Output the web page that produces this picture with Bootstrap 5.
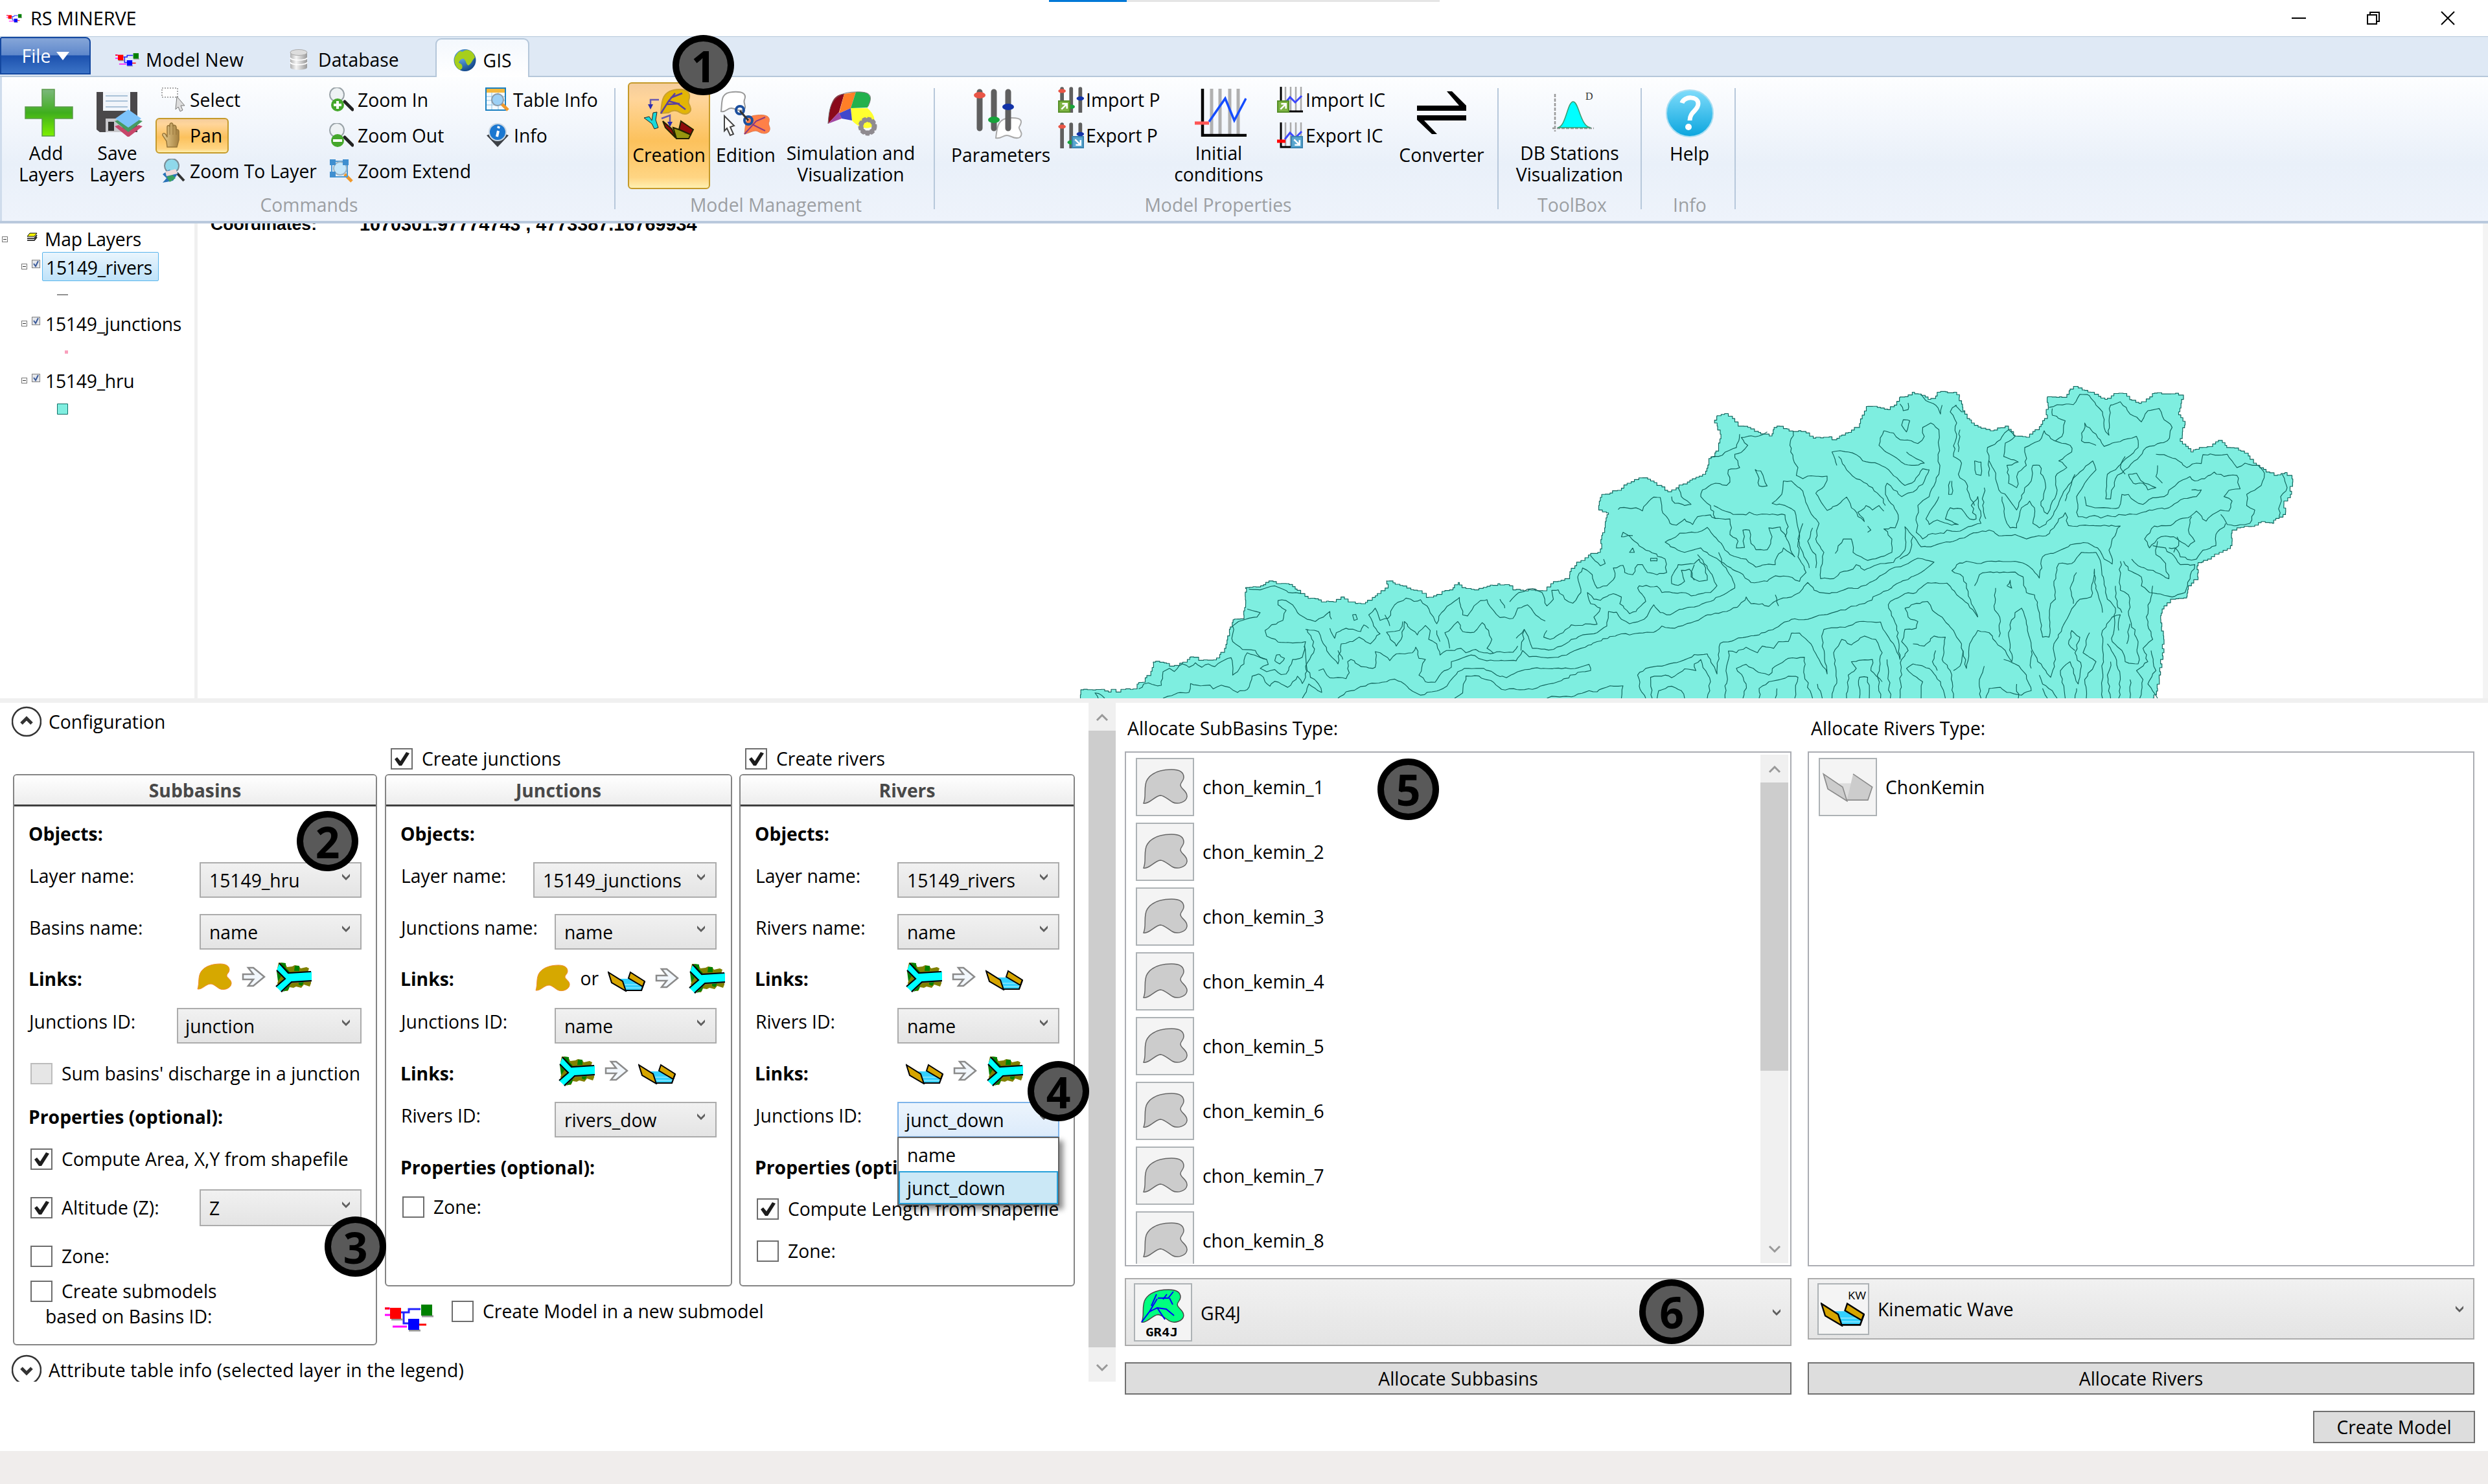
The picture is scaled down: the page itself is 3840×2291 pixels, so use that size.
<!DOCTYPE html>
<html lang="en">
<head>
<meta charset="utf-8">
<title>RS MINERVE</title>
<meta name="viewport" content="width=device-width, initial-scale=1">
<link href="https://cdn.jsdelivr.net/npm/bootstrap@5.3.0/dist/css/bootstrap.min.css" rel="stylesheet">
<script src="https://cdn.jsdelivr.net/npm/bootstrap@5.3.0/dist/js/bootstrap.bundle.min.js"></script>
<style>
  body{width:3840px;height:2291px;overflow:hidden;background:#fff;color:#000;font-family:"Open Sans","Noto Sans",sans-serif;font-size:28.3px;line-height:34px}
  svg{display:block;flex:none}
  .nw{white-space:nowrap}
  /* title bar */
  .titlebar{height:56px;padding-left:10px}
  .topstrip{left:1619px;top:0;width:603px;height:3px;background:linear-gradient(90deg,#0078d7 120px,#e5e5e5 120px)}
  /* ribbon */
  .tabbar{height:63px;background:#dfe9f5;border-top:1px solid #b5c7da;border-bottom:2px solid #b5c7da}
  .filebtn{width:140px;height:58px;color:#fff;border:2px solid #1448a0;border-radius:3px 8px 0 0;background:linear-gradient(#86a6d8 0,#5f88cb 48%,#1c51ae 50%,#3b73c6 100%);gap:9px;padding-left:1px}
  .gistab{width:145px;height:60px;margin-bottom:-2px;background:linear-gradient(#f4f8fd,#fff);border:2px solid #b5c7da;border-bottom:0;border-radius:9px 9px 0 0}
  .ribbon{height:226px;background:linear-gradient(#fdfeff 0,#f2f6fc 35%,#e9f0f9 60%,#eef3fb 100%);border-bottom:4px solid #b9c9dd;box-shadow:inset 3px 0 #cfdcec}
  .rib-sep{width:2px;height:187px;margin-top:17px;background:#b7c8db}
  .rib-group{padding-top:8px}
  .rib-main{height:165px}
  .rib-label{color:#9c9fa3;height:49px;padding-top:7px;text-align:center}
  .big{height:165px;padding-top:10px;text-align:center;line-height:33px;flex:none}
  .big svg{margin:0 auto 9px;position:relative}
  .big.one svg{margin-bottom:8px}
  .hot{background:linear-gradient(#f5cd9c 0,#ffd59a 15%,#fdc973 40%,#fcc15c 55%,#ffd583 90%,#fff0b0 100%);border:2px solid #c59a2a;border-radius:6px}
  .big.hot{padding-top:8px;width:127px}
  .sm{height:55px;padding-left:9px;padding-bottom:2px;gap:6px;white-space:nowrap}
  .sm.hot{width:113px;padding-left:7px}
  .sm svg{width:38px}
  /* map */
  .mapzone{height:733px}
  .tree{width:305px;border-right:5px solid #f0f0f0}
  .tree-row{height:44px}
  .exp{width:9px;height:9px;border:1px solid #777;background:linear-gradient(#333,#333) center/5px 1px no-repeat;flex:none}
  .tchk{width:13px;height:13px;border:1px solid #808080;background:#e4e6ea;flex:none;margin:-8px 0 0 7px}
  .sel-node{width:180px;height:45px;padding-left:5px;border:1px solid #59b5ec;border-radius:2px;background:linear-gradient(#eaf5fd,#bee2f9)}
  .tree span{letter-spacing:-.25px}
  .coords{font:bold 26.6px/30px "Liberation Sans",Arial,sans-serif;height:15px;overflow:hidden;padding-left:20px}
  .coords div{margin-top:-14px}
  .coords .cnum{font-size:28.8px;margin-left:66px}
  .hsplit{height:7px;background:#f0f0f0}
  /* configuration */
  .config{height:1155px}
  .left-pane{width:1680px;height:1048px;overflow:hidden;position:relative}
  .gbox{border:2px solid #848484;border-radius:6px;flex:none}
  .ghead{height:48px;border-bottom:3px solid #3f3f3f;background:linear-gradient(#fff,#ededed);color:#484848;font-weight:700;text-align:center;line-height:46px;border-radius:4px 4px 0 0}
  .gbody{padding:7px 22px 0 23px}
  .gr{display:flex;align-items:center;justify-content:space-between;white-space:nowrap;position:relative}
  .gr>.lab{padding-bottom:12px}
  .combo{height:55px;border:2px solid #acacac;background:linear-gradient(#f1f1f1,#e4e4e4);padding:2px 15px 0 13px;display:flex;align-items:center;justify-content:space-between}
  .combo svg{margin-top:-12px}
  .w250{width:250px}.w283{width:283px}.w285{width:285px}
  .combo.blue{border-color:#7eb4ea;background:linear-gradient(#ecf4fc,#dcebfb)}
  .cb{width:34px;height:33px;border:2px solid #6d6d6d;background:#fff;flex:none;margin-right:14px}
  .cb.off{border-color:#bcbcbc;background:#e6e6e6}
  .ck{display:flex;align-items:center;white-space:nowrap}
  .ck.in{padding-left:2px}
  .links{display:flex;align-items:center;gap:15px}
  .b{font-weight:700;text-indent:-1px}
  .dd{position:absolute;right:0;top:67px;width:250px;height:106px;background:#fff;border:2px solid #646464;box-shadow:6px 6px 8px rgba(0,0,0,.45);z-index:3}
  .dd div{height:51px;padding-left:13px;line-height:52px}
  .dd .on{background:#cbe8f6;border:2px solid #26a0da;padding-left:11px;line-height:49px}
  .sbar{background:#f0f0f0;display:flex;flex-direction:column;align-items:center;flex:none}
  .sbar .thumb{width:100%;background:#cdcdcd}
  .sbar .end{height:43px;display:flex;align-items:center}
  /* right lists */
  .lbox{height:795px;border:2px solid #abadb3;overflow:hidden;width:1029px}
  .li-row{height:90px;margin-bottom:10px;padding-left:15px}
  .tile{width:90px;height:90px;border:2px solid #adb2b5;background:#f4f4f4;display:flex;align-items:center;justify-content:center;flex:none}
  .wide{width:1029px;border:2px solid #acacac;background:linear-gradient(#f1f1f1,#e4e4e4);display:flex;align-items:center;padding:0 14px 0 12px}
  .pbtn{height:50px;border:2px solid #707070;border-radius:0;background:#ddd;font-size:28.3px;line-height:46px;text-align:center}
  .foot{height:51px;background:#f0edec}
  .pin{position:absolute;width:95px;height:93px;border:10px solid #000;border-radius:50%;background:#595959;z-index:9;font-size:66px;line-height:74px;font-weight:700;text-align:center}
</style>
</head>
<body class="d-flex flex-column position-relative">

<svg width="0" height="0" class="position-absolute">
  <defs>
    <linearGradient id="gGreen" x1="0" y1="0" x2="0" y2="1"><stop offset="0" stop-color="#7cb87c"/><stop offset=".5" stop-color="#3fae1d"/><stop offset="1" stop-color="#7df000"/></linearGradient>
    <linearGradient id="gHelp" x1="0" y1="0" x2="0" y2="1"><stop offset="0" stop-color="#7fdcfb"/><stop offset="1" stop-color="#0aa5de"/></linearGradient>
    <linearGradient id="gCyl" x1="0" x2="1"><stop offset="0" stop-color="#b0b0b0"/><stop offset=".35" stop-color="#f5f5f5"/><stop offset="1" stop-color="#999"/></linearGradient>
    <radialGradient id="gGlobe" cx=".35" cy=".3" r=".8"><stop offset="0" stop-color="#6fb6ee"/><stop offset="1" stop-color="#093c80"/></radialGradient>
    <linearGradient id="gHand" x1="0" x2="1"><stop offset="0" stop-color="#e9cf93"/><stop offset="1" stop-color="#a5803f"/></linearGradient>
  </defs>
  <symbol id="model" viewBox="0 0 75 42">
    <path d="M0 6h8M0 16h8" stroke="#f0f" stroke-width="3"/><path d="M0 6h7" stroke="red" stroke-width="3"/>
    <path d="M25 12h12V7h18M29 12v17h8" fill="none" stroke="#22f" stroke-width="3"/>
    <path d="M12 34h22" stroke="#f0f" stroke-width="3"/><path d="M52 31h12" stroke="red" stroke-width="3"/>
    <path d="M10 23h18M57 18h18M37 40h18" stroke="#999" stroke-width="3"/>
    <path d="M8 5h17v17H8z" fill="red"/><path d="M56 0h17v17H56z" fill="#008000"/><path d="M36 22h17v17H36z" fill="#00f"/>
  </symbol>
  <symbol id="basin" viewBox="0 0 54 42"><path d="M1 40C4 30 1 20 7 12 13 4 25 1 36 1c8 0 14 3 14 9 0 5-4 6-4 9 0 4 8 6 7 13-1 7-12 11-19 7-6-4-9-7-13-7-7 0-13 9-20 8z"/></symbol>
  <symbol id="arrow" viewBox="0 0 37 32"><path d="M2 12h16L10 2h8l17 14-17 14h-8l8-10H2z" fill="#f2f7fc" stroke="#8a8a8a" stroke-width="2.5"/></symbol>
  <symbol id="junc" viewBox="0 0 56 47">
    <path d="M5 1l10 1 3 6 8-1 4-2 6 1 3 4 9-2 4 2-2 6 5 3v14l-2 5-9-3-4 5-8-2-4 2-6-1-3 6-9-1L3 33l3-9-4-9z" fill="#808000"/>
    <path d="M8 1l8 1v7l6 6-5 3zM30 6h7v8h-8zM2 14l7 8-5 8zM24 31l-4 12-8 3zM36 31l8 0-3 6-5-2z" fill="#008000"/>
    <path d="M7 4l13 18h36M3 14l13 12M2 39l14-13M9 46l16-15 31-2" stroke="#777" stroke-width="3" fill="none"/>
    <path d="M6 3l14 14 36-2v14l-31 2L9 46 1 38l14-12L2 13z" fill="#0ff" /><path d="M6 2l14 15 35-2M2 13l13 13L1 38M9 46l16-15 31-2" stroke="#000" stroke-width="2.2" fill="none"/>
  </symbol>
  <symbol id="chan" viewBox="0 0 58 32">
    <path d="M19 12h15l20 12-2 6H28z" fill="#33d0ff"/><path d="M26 21h24M28 26h25" stroke="#8ae6ff" stroke-width="1.5"/>
    <path d="M1 2l22 14 5 15L6 18z" fill="#d6a500" stroke="#000" stroke-width="2"/>
    <path d="M35 2l22 14-3 8-22-13z" fill="#d6a500" stroke="#000" stroke-width="2"/><path d="M28 30h24l5-14" fill="none" stroke="#000" stroke-width="2.2"/>
  </symbol>
  <symbol id="tick" viewBox="0 0 30 29"><path d="M4 15l4-3 5 6L22 4l5 2L15 25h-4z" fill="#1c1c1c"/></symbol>
  <symbol id="chev" viewBox="0 0 14 11"><path d="M1 1l6 6 6-6v4l-6 6-6-6z" fill="#5e5e5e"/></symbol>
  <symbol id="mag" viewBox="0 0 38 38"><path d="M24 22l12 12" stroke="#222" stroke-width="5" stroke-linecap="round"/><ellipse cx="12" cy="11" rx="11" ry="11" fill="#eef2f4" stroke="#9aa3a8" stroke-width="2"/></symbol>
  <symbol id="sliders" viewBox="0 0 80 78"><g stroke="#5f5f5f" stroke-width="9" stroke-linecap="round"><path d="M9 5v56M31 5v56M53 5v56"/></g><ellipse cx="9" cy="10" rx="9" ry="5" fill="#e95546"/><ellipse cx="31" cy="48" rx="9" ry="5" fill="#16a33a"/><ellipse cx="53" cy="28" rx="9" ry="5" fill="#1232a8"/></symbol>
  <symbol id="impx" viewBox="0 0 18 18"><path d="M1 1h16v16H1z" fill="#7db343" stroke="#568f28" stroke-width="2"/><path d="M5 13l7-7M6 5h7v7" fill="none" stroke="#fff" stroke-width="2.4"/></symbol>
  <symbol id="expx" viewBox="0 0 18 18"><path d="M1 1h16v16H1z" fill="#5aa7d0" stroke="#3a83b0" stroke-width="2"/><path d="M5 5l7 7M6 13h7V6" fill="none" stroke="#fff" stroke-width="2.4"/></symbol>
  <symbol id="chart" viewBox="0 0 40 40"><path d="M13 0v38M21 0v38M29 0v38M37 0v38" stroke="#aaa" stroke-width="2.5"/><path d="M6 0v38h34" fill="none" stroke="#000" stroke-width="3"/><path d="M12 26l8-10 8 8 10-10" fill="none" stroke="#3c46ff" stroke-width="3"/></symbol>
  <symbol id="rtile" viewBox="0 0 72 56"><path d="M3 53C8 42 2 26 9 16 17 4 32 1 46 1c11 0 19 3 19 12 0 6-5 7-5 12 0 6 11 9 10 18-1 8-14 13-23 8-9-6-13-10-18-10-9 1-18 14-26 12z"/></symbol>
</svg>

<div class="topstrip position-absolute"></div>

<header class="titlebar d-flex align-items-center flex-shrink-0">
  <svg width="24" height="15"><use href="#model"/></svg>
  <span class="nw" style="margin-left:13px;font-size:28.8px">RS MINERVE</span>
  <div class="ms-auto d-flex align-items-center" style="gap:93px;padding-right:51px">
    <svg width="22" height="22"><path d="M0 11h22" stroke="#000" stroke-width="2"/></svg>
    <svg width="22" height="22"><path d="M2 6h14v14H2zM6 6V2h14v14h-4" fill="none" stroke="#000" stroke-width="2"/></svg>
    <svg width="22" height="22"><path d="M1 1l20 20M21 1L1 21" stroke="#000" stroke-width="2"/></svg>
  </div>
</header>

<nav class="tabbar d-flex align-items-end flex-shrink-0">
  <div class="filebtn d-flex align-items-center justify-content-center align-self-start">File <svg width="20" height="13"><path d="M0 0h20L10 13z" fill="#fff"/></svg></div>
  <div class="d-flex align-items-center nw" style="height:50px;margin-left:38px;gap:10px;letter-spacing:.2px"><svg width="37" height="21"><use href="#model"/></svg>Model New</div>
  <div class="d-flex align-items-center nw" style="height:50px;margin-left:71px;gap:16px">
    <svg width="28" height="33" viewBox="0 0 28 33"><path d="M1 5v23c0 5 26 5 26 0V5z" fill="url(#gCyl)"/><ellipse cx="14" cy="5" rx="13" ry="4.5" fill="#ddd" stroke="#aaa"/><path d="M1 13c0 5 26 5 26 0M1 20c0 5 26 5 26 0" fill="none" stroke="#fff" stroke-width="1.5"/></svg>Database</div>
  <div class="gistab d-flex align-items-center" style="margin-left:56px;padding-left:26px;gap:11px;padding-top:6px">
    <svg width="35" height="38" viewBox="0 0 35 38"><circle cx="17.500" cy="19" r="17" fill="url(#gGlobe)"/><path d="M17 4c7-3 15 3 16 11-4 3-5 9-10 12-4-2-3-6-6-9-3-4-8 1-9 5 4 1 7 4 5 9l-3 2C3 30 0 22 2 14c3-3 4-8 9-9 2 2 3 1 6-1z" fill="#a6cf1c"/></svg>GIS</div>
</nav>

<section class="ribbon d-flex flex-shrink-0">
  <div class="rib-group" style="width:948px">
    <div class="rib-main d-flex">
      <div class="big" style="width:84px;margin-left:29px"><svg width="75" height="74" viewBox="0 0 75 74" style="left:4px"><path d="M27 1h19v27h28v18H46v27H27V46H1V28h26z" fill="url(#gGreen)" stroke="#5a9a4a" stroke-width="1.5"/></svg>Add<br>Layers</div>
      <div class="big" style="width:90px;margin-left:23px"><svg width="75" height="74" viewBox="0 0 75 74" style="left:4px"><path d="M1 5h63v62H6l-5-4z" fill="#4a484a"/><path d="M11 5h42v29H11z" fill="#f1f5fa"/><path d="M15 11h34M15 19h34M15 28h34" stroke="#aac2d8" stroke-width="2"/><path d="M15 46h26v21H15z" fill="#c8c8cc"/><path d="M19 51h9v14h-9z" fill="#333"/><path d="M29 58l21 17 22-17-6-2-16 10-15-10z" fill="#c7476b"/><path d="M29 50l21 17 22-17-6-2-16 10-15-10z" fill="#479a63"/><path d="M30 46l20-14 20 14-20 14z" fill="#7cc3fb"/></svg>Save<br>Layers</div>
      <div style="width:259px;margin-left:14px">
        <div class="sm d-flex align-items-center"><svg height="38" viewBox="0 0 38 38"><path d="M1 1h24v14H1z" fill="#fff" stroke="#555" stroke-dasharray="2 2"/><path d="M24 14l12 14-6 0 3 7-4 2-3-7-4 4z" fill="#ddd" stroke="#777"/></svg>Select</div>
        <div class="sm hot d-flex align-items-center"><svg height="40" viewBox="0 0 38 40"><path d="M9 38l-1-9-6-9c-1-4 3-4 5-1l2 4V7c0-3 4-3 4 0V3c1-3 4-3 5 0v3c1-3 4-2 5 1v5c1-2 4-1 4 2v13l-3 11z" fill="url(#gHand)" stroke="#96753a" stroke-width="1.500"/><path d="M13 7v12M18 5v14M23 8v11" stroke="#96753a"/></svg>Pan</div>
        <div class="sm d-flex align-items-center"><svg height="38" viewBox="0 0 38 38"><path d="M24 22l11 12" stroke="#333" stroke-width="4"/><circle cx="16" cy="11" r="11" fill="#8fd8ea" stroke="#7a8c94" stroke-width="2"/><path d="M2 24l10-7 14 5-8 12-16 3 6-7z" fill="#2a73b8"/><path d="M8 28l9-3 5 5-9 6z" fill="#39a060"/><path d="M6 20l16-4 3 7-17 4z" fill="#f0dada"/></svg>Zoom To Layer</div>
      </div>
      <div style="width:241px">
        <div class="sm d-flex align-items-center"><svg height="38" viewBox="0 0 38 38"><use href="#mag"/><circle cx="13" cy="27" r="10" fill="#45a72b"/><path d="M7 27h12M13 21v12" stroke="#fff" stroke-width="4"/></svg>Zoom In</div>
        <div class="sm d-flex align-items-center"><svg height="38" viewBox="0 0 38 38"><use href="#mag"/><circle cx="13" cy="27" r="10" fill="#45a72b"/><path d="M6 27h14" stroke="#fff" stroke-width="4"/></svg>Zoom Out</div>
        <div class="sm d-flex align-items-center"><svg height="38" viewBox="0 0 38 38"><path d="M24 24l11 11" stroke="#f0982a" stroke-width="5"/><path d="M4 4h24v24H4z" fill="none" stroke="#4d9bd6" stroke-width="2"/><circle cx="17" cy="15" r="10" fill="#c5e7fb" stroke="#9bb4c4" stroke-width="2"/><path d="M1 1h9v9H1zM21 1h9v9h-9zM1 20h9v9H1z" fill="#3f8fd0"/></svg>Zoom Extend</div>
      </div>
      <div>
        <div class="sm d-flex align-items-center" style="gap:5px"><svg height="38" viewBox="0 0 38 38"><path d="M1 1h30v34H1z" fill="#f4fafe" stroke="#1a7fc0" stroke-width="2"/><path d="M2 2h28v6H2z" fill="#f5b83d"/><path d="M2 14h28M2 20h28M2 27h28M10 8v26M20 8v26" stroke="#8fc3e4"/><path d="M25 25l10 10" stroke="#f0982a" stroke-width="5"/><circle cx="19" cy="19" r="9" fill="#9cd0f5" stroke="#8a9aa8" stroke-width="2"/></svg>Table Info</div>
        <div class="sm d-flex align-items-center"><svg height="38" viewBox="0 0 38 38"><path d="M2 19l17-7 17 7-17 18z" fill="#3d4147"/><circle cx="19" cy="14" r="13" fill="#1b77d0" stroke="#c9d6e2" stroke-width="2"/><path d="M20 12l-2 9M21 5l-1 3" stroke="#fff" stroke-width="4"/></svg>Info</div>
      </div>
    </div>
    <div class="rib-label" style="padding-left:6px">Commands</div>
  </div>
  <div class="rib-sep"></div>
  <div class="rib-group" style="width:491px">
    <div class="rib-main d-flex">
      <div class="big one hot" style="margin-left:19px"><svg width="80" height="78" viewBox="0 0 80 78"><path d="M27 38C28 20 28 2 55 1c14 0 17 6 16 13-2 6-2 8 1 13 4 10-6 15-15 10-8-6-14-3-18 0z" fill="#e3b505" stroke="#caa030" stroke-width="2"/><path d="M27 38l12-19 10-12M39 19l14 4 12 9M36 24l20-1M42 14l18-7" stroke="#5a3fa0" stroke-width="2.500" fill="none"/><path d="M24 17H11v8M28 46l13-5v12" fill="none" stroke="#6a5ab0" stroke-width="2.500"/><path d="M7 24h8l-4 8zM37 51h8l-4 8z" fill="#2a2ab0"/><path d="M1 45l8-2 4 6 2-12 6-1-2 12 4 12-6 2-4-8z" fill="#18d8d8" stroke="#222"/><path d="M30 50l14 12 6 14-16-16zM58 50l19 13-4 8-18-8z" fill="#8d0a0a" stroke="#220" stroke-width="2"/><path d="M46 60l9 3 18 8-3 6H51z" fill="#97960e" stroke="#220" stroke-width="2"/></svg>Creation</div>
      <div class="big one" style="width:94px;margin-left:8px"><svg width="80" height="78" viewBox="0 0 80 78"><path d="M2 35C4 20 0 6 20 5c14-1 22 2 18 12-3 6 6 12-3 16-8 3-12-4-18-3-6 0-8 7-15 5z" fill="#fff" stroke="#999" stroke-width="2"/><path d="M38 70C40 56 38 42 56 41c16-2 22 2 20 10-3 5 4 8 0 15-5 5-12 3-17 0-6-3-12 2-21 4z" fill="#ff8048" stroke="#e07a4c"/><path d="M38 70l18-20 14-6M50 55l20 10" stroke="#8c3a80" stroke-width="2" fill="none"/><circle cx="31" cy="33" r="6" fill="none" stroke="#1c4f9e" stroke-width="4"/><circle cx="44" cy="49" r="6" fill="none" stroke="#1c4f9e" stroke-width="4"/><path d="M31 34l13 15" stroke="#333" stroke-width="3"/><path d="M7 42l15 15-6 2 5 11-5 2-5-11-4 4z" fill="#fff" stroke="#444" stroke-width="2"/></svg>Edition</div>
      <div class="big nw" style="width:210px;margin-left:10px"><svg width="78" height="74" viewBox="0 0 78 74" style="left:3px"><path d="M1 54C3 36 4 8 26 8l-8 28z" fill="#8a0a1a"/><path d="M26 8l18-3-8 25-18 8z" fill="#ff7f27"/><path d="M44 5c16-1 24 3 22 14l-4 10-26 1z" fill="#22b14c"/><path d="M36 30h26c6 6 14 14 9 27-9 8-24 2-33-8z" fill="#ffff30"/><path d="M18 38l18-8 2 19-16-3z" fill="#3f48cc"/><path d="M1 54l17-18 4 10z" fill="#a349a4"/><path d="M1 54C3 30 4 5 44 5c26-1 25 8 19 22" fill="none" stroke="#777"/><circle cx="62" cy="58" r="10.500" fill="none" stroke="#8f8b90" stroke-width="8" stroke-dasharray="5 2"/><circle cx="62" cy="58" r="10" fill="none" stroke="#8f8b90" stroke-width="6"/></svg>Simulation and<br>Visualization</div>
    </div>
    <div class="rib-label" style="padding-left:4px">Model Management</div>
  </div>
  <div class="rib-sep"></div>
  <div class="rib-group" style="width:868px">
    <div class="rib-main d-flex">
      <div class="big one" style="width:150px;margin-left:25px"><svg width="80" height="78"><path d="M34 76C36 60 36 46 56 45c20-1 19 6 14 14-2 3 8 10 1 16-7 4-14-3-20-3-6 0-10 6-17 4z" fill="#fff" stroke="#aaa" stroke-width="2"/><use href="#sliders"/></svg>Parameters</div>
      <div style="width:176px;margin-left:6px">
        <div class="sm d-flex align-items-center" style="gap:3px"><svg height="40" viewBox="0 0 40 40" style="width:40px"><use href="#sliders" x="-1" y="0" width="54" height="50"/><use href="#impx" x="0" y="21" width="19" height="19"/></svg>Import P</div>
        <div class="sm d-flex align-items-center" style="gap:3px"><svg height="40" viewBox="0 0 40 40" style="width:40px"><use href="#sliders" x="-1" y="0" width="54" height="50"/><use href="#expx" x="21" y="21" width="19" height="19"/></svg>Export P</div>
      </div>
      <div class="big" style="width:140px;margin-left:11px"><svg width="80" height="74" viewBox="0 0 80 74" style="left:3px"><path d="M26 0v70M39 0v70M54 0v70M67 0v70" stroke="#b0b0b0" stroke-width="5"/><path d="M12 0v72h68" fill="none" stroke="#000" stroke-width="4.500"/><path d="M22 51l25-36 14 34 18-34" fill="none" stroke="#144cff" stroke-width="3.500"/><path d="M0 53h22" stroke="#f55" stroke-width="5"/></svg>Initial<br>conditions</div>
      <div style="width:187px;margin-left:11px">
        <div class="sm d-flex align-items-center" style="gap:4px"><svg height="40" viewBox="0 0 40 40" style="width:40px"><use href="#chart"/><use href="#impx" x="0" y="21" width="19" height="19"/></svg>Import IC</div>
        <div class="sm d-flex align-items-center" style="gap:4px"><svg height="40" viewBox="0 0 40 40" style="width:40px"><use href="#chart"/><path d="M0 29h13" stroke="red" stroke-width="5"/><use href="#expx" x="21" y="21" width="19" height="19"/></svg>Export IC</div>
      </div>
      <div class="big one" style="width:136px;margin-left:8px"><svg width="76" height="78" viewBox="0 0 76 78"><path d="M46 4h8l22 22v8H0v-8h65zM0 41h76v8H11l20 21h-8L0 48z" fill="#000"/></svg>Converter</div>
    </div>
    <div class="rib-label" style="padding-left:6px">Model Properties</div>
  </div>
  <div class="rib-sep"></div>
  <div class="rib-group" style="width:219px">
    <div class="rib-main d-flex justify-content-center">
      <div class="big nw" style="width:190px"><svg width="66" height="74" viewBox="0 0 66 74" style="left:4px"><path d="M6 8v58M2 61h64" stroke="#999" stroke-width="2.500" stroke-dasharray="5 2"/><path d="M10 60c13-1 15-40 24-40s11 39 27 40z" fill="#0ff" stroke="#3a9a70" stroke-width="1.500"/><text x="53" y="17" font-size="16" font-family="Liberation Serif" fill="#333">D</text></svg>DB Stations<br>Visualization</div>
    </div>
    <div class="rib-label" style="padding-left:8px">ToolBox</div>
  </div>
  <div class="rib-sep"></div>
  <div class="rib-group" style="width:143px">
    <div class="rib-main d-flex justify-content-center" style="padding-left:4px">
      <div class="big" style="width:90px"><svg width="76" height="76" viewBox="0 0 76 76" style="margin-bottom:8px"><circle cx="38" cy="38" r="36" fill="url(#gHelp)" stroke="#a8def2" stroke-width="2"/><path d="M26 22c3-11 25-11 25 1 0 11-13 12-13 26" fill="none" stroke="#fff" stroke-width="7"/><circle cx="36" cy="59" r="5" fill="#fff"/></svg>Help</div>
    </div>
    <div class="rib-label" style="padding-left:5px">Info</div>
  </div>
  <div class="rib-sep"></div>
</section>

<section class="mapzone d-flex flex-shrink-0">
  <aside class="tree flex-shrink-0">
    <div class="tree-row d-flex align-items-center" style="padding:4px 0 0 3px"><i class="exp"></i><svg width="16" height="13" viewBox="0 0 16 13" style="margin:-8px 11px 0 30px"><path d="M4 1h11l-4 5H0z" fill="#ff0" stroke="#000"/><path d="M0 9h11l4-5M0 12h11l4-5" fill="none" stroke="#000" stroke-width="1.500"/></svg><span>Map Layers</span></div>
    <div class="tree-row d-flex align-items-center" style="padding-left:33px"><i class="exp"></i><i class="tchk"><svg width="11" height="11"><path d="M2 5l3 4 4-8" fill="none" stroke="#3a5a9a" stroke-width="2"/></svg></i><span class="sel-node" style="margin-left:3px;line-height:46px">15149_rivers</span></div>
    <div class="tree-row" style="padding:21px 0 0 88px"><svg width="17" height="2"><path d="M0 1h17" stroke="#222"/></svg></div>
    <div class="tree-row d-flex align-items-center" style="padding-left:33px"><i class="exp"></i><i class="tchk"><svg width="11" height="11"><path d="M2 5l3 4 4-8" fill="none" stroke="#3a5a9a" stroke-width="2"/></svg></i><span style="margin:2px 0 0 8px">15149_junctions</span></div>
    <div class="tree-row" style="padding:20px 0 0 100px"><svg width="5" height="5"><path d="M0 0h5v5H0z" fill="#f9a0bd"/></svg></div>
    <div class="tree-row d-flex align-items-center" style="padding-left:33px"><i class="exp"></i><i class="tchk"><svg width="11" height="11"><path d="M2 5l3 4 4-8" fill="none" stroke="#3a5a9a" stroke-width="2"/></svg></i><span style="margin:2px 0 0 8px">15149_hru</span></div>
    <div class="tree-row" style="padding:14px 0 0 88px"><svg width="17" height="17"><path d="M.5.5h16v16H.5z" fill="#80eee0" stroke="#0d6f66"/></svg></div>
  </aside>
  <div class="flex-grow-1">
    <div class="coords"><div class="d-flex nw align-items-center"><span>Coordinates:</span><span class="cnum">1070301.97774743 , 4773387.16769934</span></div></div>
    <svg id="map" width="1960" height="518" viewBox="0 0 1568 1504" preserveAspectRatio="none" style="margin:200px 0 0 1335px" fill="none" stroke="#0f625a" stroke-width="1.150" stroke-linejoin="round"></svg>
  </div>
  <div style="width:8px;background:#f4f4f4"></div>
</section>
<div class="hsplit flex-shrink-0"></div>

<main class="config d-flex flex-shrink-0">
  <div class="left-pane flex-shrink-0">
    <div class="d-flex align-items-center" style="height:60px;padding:0 0 4px 18px;gap:11px"><svg width="46" height="48" viewBox="0 0 46 48" style="margin-top:2px"><circle cx="23" cy="24" r="22" fill="#fff" stroke="#333" stroke-width="2.500"/><path d="M15 27l8-8 8 8" fill="none" stroke="#333" stroke-width="5"/></svg><span style="padding-top:2px">Configuration</span></div>
    <div class="d-flex align-items-start">
      <div class="gbox" style="margin:50px 0 0 20px;width:562px;height:882px">
        <div class="ghead">Subbasins</div>
        <div class="gbody">
          <div class="gr b" style="height:70px">Objects:</div>
          <div class="gr" style="height:72px"><span class="lab">Layer name:</span><div class="combo w250">15149_hru<svg width="14" height="11"><use href="#chev"/></svg></div></div>
          <div class="gr" style="height:88px"><span class="lab">Basins name:</span><div class="combo w250">name<svg width="14" height="11"><use href="#chev"/></svg></div></div>
          <div class="gr" style="height:58px"><span class="b">Links:</span><div class="links" style="margin:-6px 77px 0 0"><svg width="54" height="42" fill="#d6a800" stroke="#f08c30"><use href="#basin"/></svg><svg width="37" height="32"><use href="#arrow"/></svg><svg width="56" height="47"><use href="#junc"/></svg></div></div>
          <div class="gr" style="height:86px"><span class="lab">Junctions ID:</span><div class="combo w285" style="padding-left:11px">junction<svg width="14" height="11"><use href="#chev"/></svg></div></div>
          <div class="ck in" style="height:62px"><i class="cb off"></i>Sum basins' discharge in a junction</div>
          <div class="gr b" style="height:72px">Properties (optional):</div>
          <div class="ck in" style="height:58px"><i class="cb"><svg width="30" height="29"><use href="#tick"/></svg></i>Compute Area, X,Y from shapefile</div>
          <div class="gr" style="height:92px"><div class="ck in"><i class="cb"><svg width="30" height="29"><use href="#tick"/></svg></i>Altitude (Z):</div><div class="combo w250" style="height:57px">Z<svg width="14" height="11"><use href="#chev"/></svg></div></div>
          <div class="ck in" style="height:58px"><i class="cb"></i>Zone:</div>
          <div class="ck in" style="height:50px"><i class="cb"></i>Create submodels</div>
          <div style="height:28px;line-height:28px;padding-left:25px">based on Basins ID:</div>
        </div>
      </div>
      <div style="margin-left:12px">
        <div class="d-flex">
          <div>
            <div class="ck" style="height:50px;padding:2px 0 0 9px"><i class="cb"><svg width="30" height="29"><use href="#tick"/></svg></i>Create junctions</div>
            <div class="gbox" style="width:536px;height:791px">
              <div class="ghead">Junctions</div>
              <div class="gbody">
                <div class="gr b" style="height:70px">Objects:</div>
                <div class="gr" style="height:72px"><span class="lab">Layer name:</span><div class="combo w283">15149_junctions<svg width="14" height="11"><use href="#chev"/></svg></div></div>
                <div class="gr" style="height:88px"><span class="lab">Junctions name:</span><div class="combo w250">name<svg width="14" height="11"><use href="#chev"/></svg></div></div>
                <div class="gr" style="height:58px"><span class="b">Links:</span><div class="links" style="margin:-2px -13px 0 0"><svg width="54" height="42" fill="#d6a800" stroke="#f08c30"><use href="#basin"/></svg>or<svg width="58" height="32" style="margin-top:10px;margin-left:-1px"><use href="#chan"/></svg><svg width="37" height="32"><use href="#arrow"/></svg><svg width="56" height="47"><use href="#junc"/></svg></div></div>
                <div class="gr" style="height:86px"><span class="lab">Junctions ID:</span><div class="combo w250">name<svg width="14" height="11"><use href="#chev"/></svg></div></div>
                <div class="gr" style="height:62px"><span class="b">Links:</span><div class="links" style="margin:-8px 63px 0 0"><svg width="56" height="47"><use href="#junc"/></svg><svg width="37" height="32"><use href="#arrow"/></svg><svg width="58" height="32" style="margin-top:10px"><use href="#chan"/></svg></div></div>
                <div class="gr" style="height:80px"><span class="lab">Rivers ID:</span><div class="combo w250">rivers_dow<svg width="14" height="11"><use href="#chev"/></svg></div></div>
                <div class="gr b" style="height:68px">Properties (optional):</div>
                <div class="ck in" style="height:54px"><i class="cb"></i>Zone:</div>
              </div>
            </div>
          </div>
          <div style="margin-left:11px">
            <div class="ck" style="height:50px;padding:2px 0 0 9px"><i class="cb"><svg width="30" height="29"><use href="#tick"/></svg></i>Create rivers</div>
            <div class="gbox" style="width:518px;height:791px">
              <div class="ghead">Rivers</div>
              <div class="gbody">
                <div class="gr b" style="height:70px">Objects:</div>
                <div class="gr" style="height:72px"><span class="lab">Layer name:</span><div class="combo w250">15149_rivers<svg width="14" height="11"><use href="#chev"/></svg></div></div>
                <div class="gr" style="height:88px"><span class="lab">Rivers name:</span><div class="combo w250">name<svg width="14" height="11"><use href="#chev"/></svg></div></div>
                <div class="gr" style="height:58px"><span class="b">Links:</span><div class="links" style="margin:-6px 56px 0 0"><svg width="56" height="47"><use href="#junc"/></svg><svg width="37" height="32"><use href="#arrow"/></svg><svg width="58" height="32" style="margin-top:10px"><use href="#chan"/></svg></div></div>
                <div class="gr" style="height:86px"><span class="lab">Rivers ID:</span><div class="combo w250">name<svg width="14" height="11"><use href="#chev"/></svg></div></div>
                <div class="gr" style="height:62px"><span class="b">Links:</span><div class="links" style="margin:-8px 56px 0 0"><svg width="58" height="32" style="margin-top:10px"><use href="#chan"/></svg><svg width="37" height="32"><use href="#arrow"/></svg><svg width="56" height="47"><use href="#junc"/></svg></div></div>
                <div class="gr" style="height:80px"><span class="lab">Junctions ID:</span><div class="combo w250 blue" style="padding-left:11px">junct_down<svg width="14" height="11"><use href="#chev"/></svg></div>
                  <div class="dd"><div>name</div><div class="on">junct_down</div></div></div>
                <div class="gr b" style="height:68px">Properties (optional):</div>
                <div class="ck in" style="height:60px"><i class="cb"><svg width="30" height="29"><use href="#tick"/></svg></i>Compute Length from shapefile</div>
                <div class="ck in" style="height:70px"><i class="cb"></i>Zone:</div>
              </div>
            </div>
          </div>
        </div>
        <div class="ck" style="height:76px"><svg width="75" height="42" style="margin:21px 28px 0 0"><use href="#model"/></svg><i class="cb"></i>Create Model in a new submodel</div>
      </div>
    </div>
    <div class="d-flex align-items-center" style="height:60px;margin-top:8px;padding-left:18px;gap:11px"><svg width="46" height="48" viewBox="0 0 46 48"><circle cx="23" cy="24" r="22" fill="#fff" stroke="#333" stroke-width="2.500"/><path d="M15 21l8 8 8-8" fill="none" stroke="#333" stroke-width="5"/></svg><span style="letter-spacing:.15px">Attribute table info (selected layer in the legend)</span></div>
  </div>

  <div class="sbar" style="width:42px;height:1048px">
    <div class="end"><svg width="20" height="14"><path d="M2 12l8-8 8 8" fill="none" stroke="#999" stroke-width="3"/></svg></div>
    <div class="thumb" style="height:952px"></div>
    <div class="end mt-auto"><svg width="20" height="14"><path d="M2 2l8 8 8-8" fill="none" stroke="#999" stroke-width="3"/></svg></div>
  </div>

  <div style="margin-left:14px;width:2084px" class="flex-shrink-0">
    <div class="d-flex" style="gap:25px">
      <div>
        <div style="height:75px;padding:22px 0 0 4px">Allocate SubBasins Type:</div>
        <div class="lbox d-flex">
          <div class="flex-grow-1" style="padding-top:8px;height:789px;overflow:hidden" id="basins"></div>
          <div class="sbar" style="width:43px;height:785px;margin:3px 3px 0 0">
            <div class="end"><svg width="20" height="14"><path d="M2 12l8-8 8 8" fill="none" stroke="#999" stroke-width="3"/></svg></div>
            <div class="thumb" style="height:445px"></div>
            <div class="end mt-auto"><svg width="20" height="14"><path d="M2 2l8 8 8-8" fill="none" stroke="#999" stroke-width="3"/></svg></div>
          </div>
        </div>
        <div class="wide" style="height:105px;margin-top:18px"><div class="tile"><svg width="76" height="80" viewBox="0 0 76 80"><g transform="translate(2 4)" fill="#00ff80" stroke="#444" stroke-width="1.500"><use href="#rtile" width="70" height="54"/></g><path d="M5 55l12-16 12-20M17 39l12-6 14 2 12 10M29 33l12 18M20 30l8-18M30 18h16l8-10M48 18l5 10M44 12l-6 8" stroke="#00f" stroke-width="2" fill="none"/><text x="11" y="77" font-family="DejaVu Sans Mono" font-weight="bold" font-size="17" textLength="50" lengthAdjust="spacingAndGlyphs">GR4J</text></svg></div><span style="margin:3px 0 0 13px">GR4J</span><svg class="ms-auto" width="14" height="11"><use href="#chev"/></svg></div>
        <div class="pbtn" style="margin-top:25px">Allocate Subbasins</div>
      </div>
      <div>
        <div style="height:75px;padding:22px 0 0 5px">Allocate Rivers Type:</div>
        <div class="lbox"><div class="li-row d-flex align-items-center" style="margin-top:8px"><div class="tile"><svg width="78" height="46" viewBox="0 0 58 32" preserveAspectRatio="none"><path d="M19 12h15l20 12-2 6H28z" fill="#ddd"/><path d="M1 2l22 14 5 15L6 18zM35 2l22 14-5 14H28" fill="#ccc" stroke="#8a8a8a" stroke-width="1.200"/></svg></div><span style="margin-left:13px">ChonKemin</span></div></div>
        <div class="wide" style="height:95px;margin-top:18px"><div class="tile" style="width:80px;height:80px;margin-left:1px"><svg width="74" height="72" viewBox="0 0 74 72"><text x="44" y="21" font-size="17" textLength="28" lengthAdjust="spacingAndGlyphs">KW</text><use href="#chan" x="2" y="25" width="68" height="38"/></svg></div><span style="margin:1px 0 0 13px">Kinematic Wave</span><svg class="ms-auto" width="14" height="11"><use href="#chev"/></svg></div>
        <div class="pbtn" style="margin-top:35px">Allocate Rivers</div>
      </div>
    </div>
    <div class="d-flex justify-content-end"><div class="pbtn" style="width:250px;margin-top:25px">Create Model</div></div>
  </div>
</main>
<footer class="foot flex-shrink-0"></footer>

<div class="pin" style="left:1038px;top:54px">1</div>
<div class="pin" style="left:458px;top:1252px">2</div>
<div class="pin" style="left:501px;top:1878px">3</div>
<div class="pin" style="left:1586px;top:1638px">4</div>
<div class="pin" style="left:2126px;top:1171px;height:95px">5</div>
<div class="pin" style="left:2530px;top:1975px;width:100px;height:100px;line-height:80px">6</div>

<script>
  // catchment boundary and elevation band boundaries, in the map's own units
  const outline = "22 1504 26 1466 52 1464 60 1476 66 1464 72 1476 78 1464 92 1462 94 1440 102 1432 104 1412 109 1402 112 1345 120 1338 132 1348 138 1360 154 1342 158 1320 168 1320 174 1334 190 1332 200 1298 203 1262 206 1210 212 1152 224 1148 226 1012 248 1000 260 978 270 990 284 994 294 1020 306 1056 316 1058 326 1072 338 1072 348 1050 356 1072 374 1080 386 1052 402 1010 400 978 408 978 420 998 430 1010 444 1022 452 1052 462 1045 472 1025 482 1018 490 985 498 1008 514 1018 528 1002 540 990 556 1000 560 1018 598 1022 606 990 626 968 628 936 640 894 652 862 664 850 670 740 674 680 662 660 664 620 670 590 690 572 702 540 716 516 726 522 740 550 752 578 766 548 782 520 794 500 798 440 810 396 812 320 805 270 808 240 822 228 830 250 836 284 846 285 862 312 876 328 882 290 890 285 902 306 918 308 930 338 950 332 956 345 962 328 974 312 984 290 990 235 994 196 1010 200 1022 210 1030 190 1034 156 1044 152 1052 132 1060 140 1072 164 1078 160 1084 132 1104 132 1110 170 1114 215 1120 250 1134 288 1150 305 1158 292 1168 284 1176 325 1194 334 1206 300 1216 250 1216 156 1240 155 1244 125 1254 106 1262 122 1274 132 1290 164 1298 148 1304 138 1314 138 1320 165 1332 182 1338 175 1348 138 1378 137 1384 145 1378 220 1386 262 1380 340 1390 375 1396 400 1408 380 1420 376 1432 348 1442 380 1452 382 1464 405 1474 450 1486 478 1500 505 1512 492 1518 505 1516 590 1508 620 1510 670 1498 698 1494 720 1480 712 1472 728 1450 740 1444 750 1442 820 1428 850 1414 880 1402 896 1402 960 1390 1000 1388 1048 1368 1060 1360 1090 1356 1150 1360 1240 1358 1300 1354 1400 1352 1460 1346 1504";
  const bands = [
    "44 1504 40 1480 48 1490 52 1504","94 1462 100 1440 106 1435 114 1445 122 1446 124 1385 132 1370 138 1384 148 1350 156 1365 164 1345 172 1365 180 1350 188 1362 196 1340 208 1322 210 1400 216 1385 224 1350 228 1300 252 1330 254 1352 244 1370 252 1385 262 1375 270 1398 276 1395 284 1330 296 1320 300 1250 284 1256 266 1252 252 1225 250 1200 258 1175 272 1155 276 1110 266 1085 266 1066 276 1066 284 1085 290 1120 302 1150 312 1160 322 1140 330 1115 332 1150",
    "230 1015 244 1018 262 1000 272 1015 284 1032 294 1034","228 1104 244 1120 240 1140 222 1155 210 1180 210 1250 222 1285 238 1290 244 1320 252 1330","124 1504 130 1495 142 1480 156 1478 158 1438 170 1448 182 1445 186 1462 196 1445 206 1455 216 1478 228 1465 234 1405 242 1395 248 1410 250 1430 256 1450 262 1428 270 1440 278 1455 284 1430 290 1405 296 1438 300 1410 302 1380 298 1270",
    "264 1310 268 1308 274 1325 268 1350 262 1335 264 1310","302 1195 310 1250 310 1300 300 1360 306 1410 316 1440 320 1478 312 1460 304 1440 296 1504","300 1195 316 1205 322 1260 330 1310 340 1350 344 1260 358 1250 366 1230 380 1260 392 1215 384 1180 378 1130 386 1100 392 1155 402 1145 410 1085 424 1055 434 1070 442 1062 450 1090 458 1140 462 1170 468 1120 480 1080 490 1052 494 1130 500 1135 508 1090 516 1066 524 1062 532 1110 540 1142 556 1146 562 1100 574 1085 584 1130 596 1158",
    "316 1380 322 1372 330 1412 350 1416 354 1390 352 1340 356 1330 366 1355 378 1368 386 1365 386 1295 396 1310 404 1335 412 1305 432 1300 436 1275 440 1325 448 1330 440 1400 448 1430 460 1432 468 1390 480 1365 480 1340 504 1310 524 1336 560 1336 568 1290 576 1318 612 1320 640 1280 660 1250 690 1215 700 1220 712 1212 730 1208 740 1180 756 1190 780 1160 796 1130 820 1115 836 1085 844 1050 850 1080 864 1080 872 1092 884 1062 900 1050 910 1030 920 985 928 1020 940 1032 956 1030 970 1010 982 1012 1000 980 1020 930 1044 900 1056 876 1076 894 1060 940 1030 990 1010 1035 994 1070 970 1100 940 1130 920 1150 900 1150 880 1190 860 1220 840 1232 812 1258 808 1395 800 1330 796 1305 780 1308 762 1340 740 1360 720 1370 710 1400 712 1450 720 1504",
    "330 1190 336 1235 338 1210 350 1190 368 1205 372 1175 378 1190","358 1130 362 1128 364 1150 360 1155 358 1130","420 1160 416 1200 400 1208 412 1270 418 1240 422 1160 430 1195 438 1220 448 1178 454 1200 452 1240 462 1260 466 1310 474 1290 484 1290 492 1280 498 1300 510 1285 520 1300 532 1302 540 1295 556 1298 562 1270",
    "478 1280 476 1240 472 1210 480 1190 488 1160 494 1205 508 1208 518 1165 526 1200 530 1240 524 1280 532 1302","340 1504 350 1475 364 1460 382 1436 400 1430 410 1418 418 1430 428 1462 442 1490 456 1475 470 1460 480 1420 488 1385 496 1370 520 1370 536 1400 548 1412 562 1385 580 1370 636 1368 650 1352 652 1380 636 1388 616 1425 600 1440 580 1464 542 1464 532 1432 514 1404 498 1404 494 1480 484 1504",
    "598 1504 604 1495 632 1494 650 1470 660 1475 676 1448 692 1448 690 1504","560 1235 570 1195 576 1240 580 1280 600 1288 616 1270 628 1240 642 1220 660 1210 672 1180 674 1115 684 1118 690 1150 700 1170 718 1150 730 1085 738 1120 750 1130 762 1105 780 1095 800 1070 816 1040 830 1010 826 960 816 910 810 850","598 1200 594 1230 602 1240 618 1210 628 1175 660 1172 656 1140 664 1100 652 1080 648 1030 656 1060 664 1065 680 1035 690 1050 688 1080 700 1125 708 1115 720 1070 710 1010 712 1000 734 1002 740 1030 764 1030 776 1045 800 1030 808 1000 802 950 792 900 784 860",
    "552 1072 560 1040 574 1015 584 1015 592 1030 598 1090 606 1060 604 1020 612 1018 620 1060 630 1078 640 1030 636 960 642 920 654 950 660 1010 672 1000 682 960 680 920 692 908 694 940 704 950 710 905 716 905 722 940 734 950 746 940 744 880 720 840 706 800 692 760 690 780 704 775",
    "652 865 664 910 670 900 668 880","704 830 700 850 706 850 704 830","726 876 734 876 734 888 726 888 726 876","754 945 760 905 780 900 786 880 794 920 796 975 786 980 776 960 780 905","754 945 752 990 760 998 768 980 764 930 774 925 780 975",
    "686 658 688 650 708 650 716 664 724 620 730 602 738 604 740 660 750 720 758 728 768 700 778 725 784 690 800 682 806 698 824 700 826 740 824 770 834 800 832 830 842 828 840 750 848 750 850 810 856 838 870 838 876 780 872 740 886 736 894 790 898 820 904 870 890 830 882 870 880 905 868 905 856 916 844 880 824 860 810 800 796 738 784 760 762 764 752 790 744 804 756 830 768 850 788 830 798 860 820 910 836 940 850 985 870 980 880 955 896 958 910 980 918 940 908 870 910 770 904 665 892 640 876 630 888 590 890 530 900 530 914 575 922 660 934 720 930 790 940 850 936 968 952 968 960 940 976 925 980 905 990 930 1010 900 1026 895 1040 840 1040 735 1048 770 1060 825 1072 825 1086 808 1104 795 1120 770 1144 750 1156 776 1176 770 1190 790 1200 780 1214 776 1224 740 1230 700 1238 672 1242 730 1306 732 1296 790 1292 840 1296 902 1286 880 1278 830 1266 808 1250 812 1232 840 1210 870 1206 965 1190 905 1176 890 1142 890 1134 900 1116 890 1104 905 1098 932 1112 960 1116 1010 1122 1080 1130 1140",
    "752 600 756 630 768 640 776 635 764 600 760 560","806 698 800 640 788 600 790 570 806 540 820 550 824 535 822 480 836 470 830 410 838 402 846 370 838 335 860 328 870 310","804 640 818 665 828 680 844 682 848 670 854 680 892 682 896 735 892 780","855 478 862 485 870 552 860 552 858 500 855 478",
    "902 308 898 370 902 430 908 470 906 505 914 520 920 508 944 508 940 555 930 585 944 662 956 640 968 602 974 650 990 712 982 670 992 640 1000 660 1008 640 1014 665","836 320 832 380 810 420 800 425","956 460 950 400 960 394 970 400 980 412 988 440 1008 455 1020 480 1030 515 1040 550 1052 530 1062 475 1070 480 1062 545 1050 580 1036 600 1026 570 1018 540 1016 590 1026 640 1032 700 1028 740 1014 745 1024 790 1024 850 1010 870 994 886 976 850 974 790 964 790 954 855","958 420 968 480 980 520 1000 560 1010 600 1016 640","994 732 998 750 994 760",
    "1014 305 1008 370 1022 410 1040 455 1052 460 1064 450 1054 430 1042 400","1014 305 1026 315 1034 345 1048 350 1056 362 1064 330 1062 290 1072 270 1082 300 1082 500 1070 600 1056 640 1054 760 1062 790 1074 765 1088 765 1092 750 1108 755 1118 735 1134 720 1130 600 1122 640 1128 700 1120 700 1110 655 1096 650 1090 700 1106 725 1098 728 1080 705 1070 725 1066 700 1074 650 1082 600","1038 255 1046 260 1042 310 1036 280 1038 255","1060 140 1066 170 1078 190 1084 230 1086 190","1034 185 1038 215 1044 210 1044 180","1104 190 1096 220 1104 270 1100 420 1110 450 1106 500 1116 540 1120 600 1126 640",
    "1102 190 1110 220 1114 220","1096 530 1094 590 1098 590 1098 530","1126 440 1134 445 1134 505 1128 500 1126 440","1144 510 1142 380 1158 345 1168 300 1176 330 1164 360 1162 420 1180 445 1166 460 1168 540 1178 560 1180 490 1190 460 1188 380 1206 350 1212 305 1220 340 1244 370 1246 400 1230 440 1240 470 1226 510 1228 570 1220 640 1216 678 1208 640 1214 560 1206 460 1198 460 1196 530 1188 560 1178 660 1166 600 1156 570 1150 480 1144 440","1160 600 1166 720 1170 740 1178 740 1184 650 1194 620 1200 650 1198 720 1206 740 1220 700 1232 610 1240 560 1256 490 1272 440 1276 480 1262 540 1252 600 1254 690 1264 696 1274 685 1282 696 1290 685 1300 690 1304 680 1326 680 1342 660 1366 650 1380 615 1400 600 1406 570 1394 570",
    "1218 200 1228 188 1248 188 1256 142 1268 148 1276 190 1284 220 1286 290 1292 325 1294 190 1306 175 1318 230 1332 265 1340 215 1354 205 1358 240 1370 290 1364 350 1338 380 1330 420 1316 470 1300 520 1294 610 1288 610 1290 500 1300 480 1328 380 1326 330 1310 345 1296 360 1286 375 1276 320 1262 270 1258 350 1276 370","1222 205 1222 235 1238 260 1234 330 1226 350",
    "1262 600 1264 640 1280 650 1304 650 1308 590 1316 590 1324 620 1334 635 1346 605 1360 600 1378 535 1392 510 1398 530 1410 520 1422 490 1434 510 1450 505 1454 565 1440 572 1434 600 1444 620 1440 665 1430 660 1420 680 1412 710 1400 665 1392 690 1380 700 1368 730 1348 732 1336 790 1342 830 1356 780 1372 780 1390 825 1398 800 1390 750 1394 690",
    "1316 500 1326 495 1336 540 1350 560 1340 570 1334 540 1322 540 1316 500","1350 410 1360 412 1374 430 1388 470 1400 450 1406 452 1408 412 1438 410 1444 440 1450 470 1460 450 1476 460 1484 495 1480 550 1462 590 1462 640 1472 660 1466 720 1450 730 1438 725 1430 680","1506 500 1512 560 1504 600 1502 690","1366 830 1374 830 1380 870 1394 885 1400 880 1408 840 1424 820 1424 770 1436 720","1320 880 1328 910 1350 940 1366 968 1362 900 1350 860 1352 800","1346 820 1362 830 1380 905 1398 905 1386 1030 1370 1050 1342 1030 1332 1000 1332 960 1316 930 1310 890",
    "1126 1000 1132 950 1140 940 1176 938 1186 960 1190 1030 1200 1040 1206 1120 1210 1230 1218 1230 1220 1080 1226 1060 1224 980 1230 900 1246 900 1258 850 1276 850 1282 900 1286 980 1290 1060 1300 1100 1296 1250 1308 1290 1312 1340 1328 1350 1328 1250 1318 1150 1316 1040 1306 1020 1306 890","1166 1000 1170 975 1172 1010 1166 1000","1040 1100 1048 1085 1068 1070 1074 1110 1088 1150 1100 1200 1110 1260 1116 1370 1120 1260 1130 1200 1144 1210 1152 1250 1164 1290 1172 1340 1168 1210 1176 1120 1184 1100 1190 1170 1196 1270 1204 1340 1214 1380 1220 1410 1226 1330 1224 1260 1234 1190 1244 1120 1256 1060 1270 1050 1274 925 1276 1000 1280 1060 1284 1120",
    "1130 1140 1118 1080 1104 1040 1092 988 1068 986 1054 1030 1040 1035 1022 1070 1020 1100 1030 1180 1034 1330 1026 1260 1018 1220 1010 1162 984 1160 970 1180 940 1195 938 1240 944 1395 934 1330 924 1260 910 1212 900 1212 896 1250 884 1250 878 1280 864 1270 858 1300 844 1275 832 1300 822 1292 818 1504","1040 1100 1044 1140 1056 1160 1054 1190 1040 1195 1036 1250 1044 1290 1036 1330 1034 1504","1060 1504 1062 1430 1050 1400 1042 1370 1050 1350 1070 1370 1084 1430 1090 1504","1050 1260 1064 1270 1076 1225 1090 1230 1086 1330 1096 1380 1100 1504",
    "1140 1504 1144 1460 1158 1455 1166 1478 1184 1490 1196 1470 1190 1400 1176 1350 1162 1330","1206 1400 1210 1440 1222 1470 1228 1504","1238 1504 1232 1380 1244 1340 1254 1440 1258 1360 1250 1300 1256 1230 1246 1200 1242 1260 1250 1290","1264 1504 1262 1420 1276 1340 1268 1320 1260 1300 1268 1210","1284 1504 1284 1200 1296 1140 1306 1130 1304 1200","1304 1504 1306 1420 1300 1320 1290 1260","1330 1504 1334 1420 1326 1380 1340 1340 1334 1280 1346 1240 1338 1140 1346 1000",
    "728 1504 726 1410 744 1400 752 1412 768 1372 782 1380 780 1350 788 1330 794 1380 800 1430 796 1504","734 1504 736 1470 752 1450 764 1470 768 1504","840 1504 844 1440 832 1370 844 1352 856 1380 872 1400 880 1360 896 1325 916 1320 916 1400 926 1504","860 1504 860 1460 872 1430 886 1420 896 1405 908 1410 904 1504","950 1504 956 1420 952 1300 962 1240 974 1265 990 1225 1004 1240 1012 1300 1006 1400 1010 1504","968 1504 970 1400 980 1370 974 1340 1000 1330 998 1380 1012 1430","984 1504 984 1410 994 1410 996 1504","1022 1504 1018 1330","1352 1504 1340 1440 1350 1380 1344 1290",
    "914 720 908 790 914 850 922 920","926 740 920 800 930 860 930 920","1050 780 1046 850 1034 880","1138 560 1136 640 1140 700","1108 300 1106 400","1250 500 1244 560 1238 620","1312 420 1306 470 1312 500","1352 460 1350 510 1358 540","1376 780 1378 820 1372 850","1300 1000 1302 1080 1308 1120","1152 1010 1150 1090 1158 1160 1156 1230","1252 940 1244 1010 1248 1080","1112 1290 1108 1360 1100 1380","1196 1370 1196 1290","1318 1170 1314 1260","884 1090 880 1040","462 1200 466 1250","340 1290 346 1330","404 1180 398 1130","540 1060 546 1100","570 1200 566 1290","1078 1290 1074 1340 1080 1380","1134 1504 1132 1420 1138 1360","1180 1504 1178 1440","1216 1504 1210 1460","1250 1504 1252 1460","1294 1504 1290 1400 1294 1340","1318 1504 1318 1420","880 1504 882 1460","938 1504 932 1440"
  ];
  // split each stretch into short cell-sized steps, as a raster-derived boundary has
  let seed = 7;
  const rnd = () => (seed = (seed * 16807) % 2147483647) / 2147483647 - .5;
  function trace(text, jitter, stepped) {
    const n = text.split(" ").map(Number);
    let x = n[0], y = n[1], d = `M${x} ${y}`;
    for (let i = 2; i < n.length; i += 2) {
      const dx = n[i] - x, dy = n[i + 1] - y;
      const k = Math.max(1, Math.round(Math.hypot(dx * 1.25, dy / 2.9) / 6));
      for (let j = 1; j <= k; j++) {
        const last = j === k;
        const px = (x + dx * j / k + (last ? 0 : rnd() * jitter)).toFixed(1);
        const py = (y + dy * j / k + (last ? 0 : rnd() * jitter * 2.4)).toFixed(1);
        d += stepped ? `V${py}H${px}` : `L${px} ${py}`;
      }
      x = n[i]; y = n[i + 1];
    }
    return d;
  }
  document.getElementById("map").innerHTML =
    `<path fill="#7eeee0" vector-effect="non-scaling-stroke" d="${trace(outline, 3, true)}"/>` +
    bands.map(b => `<path vector-effect="non-scaling-stroke" d="${trace(b, 3, false)}"/>`).join("");

  // sub-basin list
  document.getElementById("basins").innerHTML = [1,2,3,4,5,6,7,8].map(n =>
    `<div class="li-row d-flex align-items-center"><div class="tile"><svg width="72" height="56" fill="#ccc" stroke="#666" stroke-width="1.500"><use href="#rtile"/></svg></div><span style="margin-left:13px">chon_kemin_${n}</span></div>`).join("");
</script>
</body>
</html>
